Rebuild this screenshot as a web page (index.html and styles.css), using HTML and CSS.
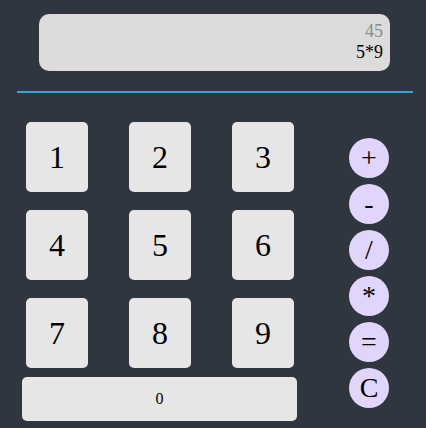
FILE: index.html
```html
<!DOCTYPE html>
<html>
<head>
<meta charset="utf-8">
<link rel="stylesheet" href="styles.css">
</head>
<body>
<div class="display">
  <div class="result">45</div>
  <div class="expr">5*9</div>
</div>
<div class="divider"></div>
<div class="pad">
  <div class="left">
    <div class="digits">
      <button class="key">1</button>
      <button class="key">2</button>
      <button class="key">3</button>
      <button class="key">4</button>
      <button class="key">5</button>
      <button class="key">6</button>
      <button class="key">7</button>
      <button class="key">8</button>
      <button class="key">9</button>
    </div>
    <button class="zero">0</button>
  </div>
  <div class="ops">
    <button class="op">+</button>
    <button class="op">-</button>
    <button class="op">/</button>
    <button class="op">*</button>
    <button class="op">=</button>
    <button class="op">C</button>
  </div>
</div>
</body>
</html>
```
FILE: styles.css
```css
html, body {
  margin: 0;
  padding: 0;
  background: #2f3640;
  width: 426px;
  height: 428px;
  overflow: hidden;
  font-family: "Liberation Serif", "Times New Roman", serif;
}
.display {
  margin: 14px 0 0 39px;
  width: 351px;
  height: 57px;
  box-sizing: border-box;
  padding: 7px 7px 0 0;
  background: #dcdcdc;
  border-radius: 10px;
  text-align: right;
  font-size: 18px;
}
.result { color: #8a8a8a; }
.expr { color: #000; }
.divider {
  margin: 20px 0 0 17px;
  width: 396px;
  height: 2px;
  background: #3d9fd2;
}
.pad {
  display: flex;
  margin-top: 29px;
}
.left {
  display: flex;
  flex-direction: column;
  margin-left: 22px;
}
.digits {
  display: grid;
  grid-template-columns: repeat(3, 62px);
  grid-auto-rows: 70px;
  column-gap: 41px;
  row-gap: 18px;
  margin-left: 4px;
}
button {
  border: none;
  padding: 0;
  font-family: "Liberation Serif", "Times New Roman", serif;
  color: #000;
}
.key {
  background: #e6e6e6;
  border-radius: 5px;
  font-size: 32px;
}
.zero {
  margin-top: 9px;
  width: 275px;
  height: 44px;
  background: #e6e6e6;
  border-radius: 5px;
  font-size: 16px;
}
.ops {
  display: flex;
  flex-direction: column;
  gap: 6px;
  margin: 16px 0 0 52px;
}
.op {
  width: 40px;
  height: 40px;
  border-radius: 50%;
  background: #e2d5fc;
  font-size: 28px;
  line-height: 40px;
}
```
